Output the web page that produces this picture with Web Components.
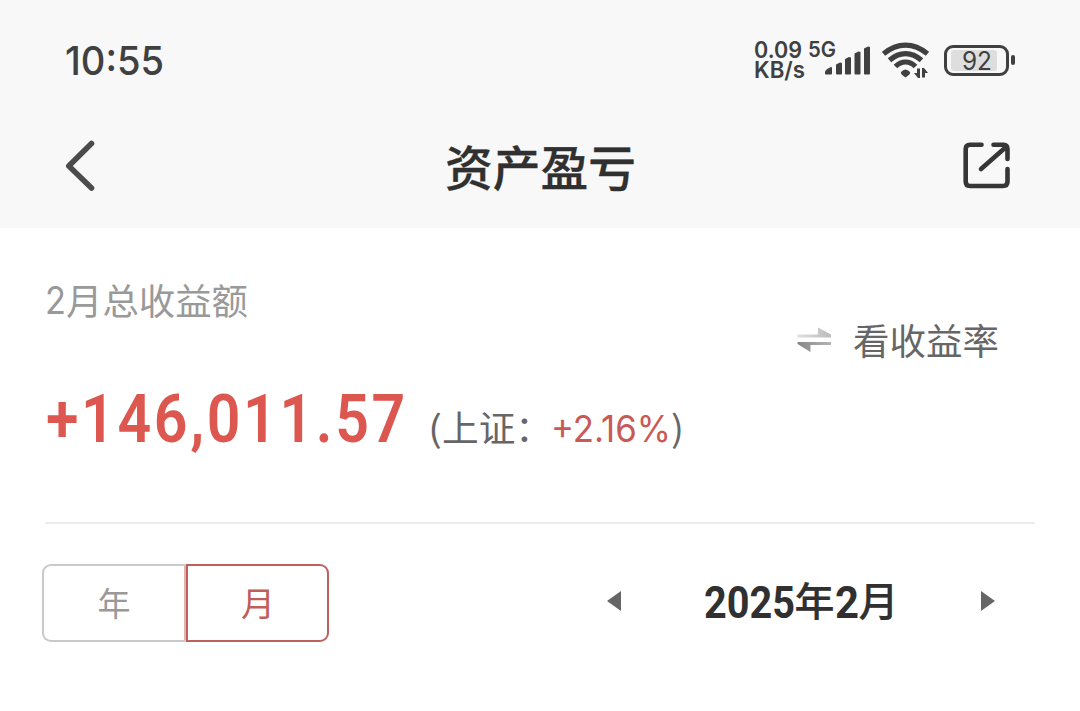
<!DOCTYPE html>
<html lang="zh-CN"><head><meta charset="utf-8"><title>资产盈亏</title>
<style>html,body{margin:0;background:#fff}body{font-family:Inter,"Noto Sans CJK SC",sans-serif;width:1080px;height:711px;overflow:hidden}</style></head>
<body><asset-page></asset-page>
<script>
const define=(name,html,ready)=>customElements.define(name,class extends HTMLElement{
  constructor(){super();this.attachShadow({mode:'open'}).innerHTML=html;}
  connectedCallback(){if(ready)ready.call(this);}
});

/* A run of text condensed or expanded to the advance width in its "w" attribute. */
define('fit-text',`<style>:host{display:block;flex:none;white-space:pre}span{display:inline-block;transform-origin:0 50%}</style><span><slot></slot></span>`,function(){
  const w=+this.getAttribute('w');this.style.width=w+'px';
  const s=this.shadowRoot.querySelector('span');
  const fit=()=>{s.style.transform='none';const n=s.getBoundingClientRect().width;if(n)s.style.transform='scaleX('+w/n+')';};
  fit();document.fonts.ready.then(fit);
});

define('signal-icon',`<style>:host{display:block;width:46px;height:32px}svg{display:block}</style>
<svg width="46" height="32" viewBox="0 0 46 32" fill="#404040"><path d="M0 29.5V28q0-2 3-3.500L6 23q1 0 1 1v5.500q0 1-1 1H1q-1 0-1-1z"/><path d="M11 20.500l4-2q2 0 2 1v10q0 1-1 1h-4q-1 0-1-1z"/><path d="M20 15l4-2q2 0 2 1v15.500q0 1-1 1h-4q-1 0-1-1z"/><path d="M29.500 9.500l4-2q2 0 2 1v21q0 1-1 1h-4q-1 0-1-1z"/><path d="M39 4.500l4-2q2 0 2 1v26q0 1-1 1h-4q-1 0-1-1z"/></svg>`);

define('wifi-icon',`<style>:host{display:block;width:48px;height:38px}svg{display:block}</style>
<svg width="48" height="38" viewBox="0 0 48 38"><g fill="none" stroke="#404040" stroke-width="5.200"><path d="M1.500 12.800Q12 4.100 23.500 4.100T45.500 12.800"/><path d="M7.500 19.300Q15 12.600 23.500 12.600T39.500 19.300"/><path d="M13.500 25.500Q18 21 23.500 21T33.500 25.500"/></g><path d="M19 31q4.500-5 9 0 1 2-4.500 5.500-5.500-3.500-4.500-5.500z" fill="#404040"/><path d="M38 27.500v9.500h-2l-4-5h3v-4.500zM40 36.500v-9.500h2l4 5h-3v4.500z" fill="#404040"/></svg>`);

define('battery-icon',`<style>:host{display:flex;align-items:center;width:72px;height:32px}
.case{box-sizing:border-box;width:65px;height:31px;border:3px solid #404040;border-radius:9px;padding:2px 8px 2px 4px}
.level{height:21px;width:46px;background:#dedede;border-radius:3px;padding-left:11px;box-sizing:border-box;font:400 25px/22px Inter,sans-serif;color:#404040}
.tip{width:4px;height:10px;margin-left:2px;border-radius:2px;background:#404040}</style>
<div class="case"><div class="level"><fit-text w="30">92</fit-text></div></div><div class="tip"></div>`);

define('status-bar',`<style>:host{display:flex;height:120px;box-sizing:border-box;padding:0 64px 0 65px;color:#404040;align-items:flex-start}
.time{font:500 40px/48px Inter,sans-serif;margin-top:37px}
.right{display:flex;margin-left:auto}
.speed{font:600 22.500px/20px Inter,sans-serif;margin:40px 0 0 1px;width:51px}
.net{font:600 21px/20px Inter,sans-serif;margin:40px 0 0 3px;width:27px}
signal-icon{margin:44px 0 0 -10px}wifi-icon{margin:41px 0 0 11px}battery-icon{margin:44px 0 0 14px}</style>
<div class="time"><fit-text w="99">10:55</fit-text></div>
<div class="right"><div class="speed"><fit-text w="48">0.09</fit-text><fit-text w="51">KB/s</fit-text></div><div class="net"><fit-text w="28">5G</fit-text></div><signal-icon></signal-icon><wifi-icon></wifi-icon><battery-icon></battery-icon></div>`);

define('nav-bar',`<style>:host{display:flex;height:108px;box-sizing:border-box;padding:0 68px 0 64px;justify-content:space-between;align-items:flex-start}
.title{font:500 48px/60px "Noto Sans CJK SC",sans-serif;color:#303030;-webkit-text-stroke:.3px #303030;margin:15px 0 0 4px}svg{display:block}.back{margin-top:20px}.share{margin-top:21px}</style>
<svg class="back" width="50" height="52" viewBox="0 0 50 52"><path d="M27.500 3.500L4.800 26l22.700 22" fill="none" stroke="#4b4b4b" stroke-width="5.600" stroke-linecap="round" stroke-linejoin="round"/></svg>
<div class="title"><fit-text w="191">资产盈亏</fit-text></div>
<svg class="share" width="50" height="50" viewBox="0 0 50 50" fill="none" stroke="#363636" stroke-width="4.600" stroke-linecap="round" stroke-linejoin="round"><path d="M19.500 3.700H8Q3.700 3.700 3.700 8V40.500Q3.700 45 8 45H41Q45.500 45 45.500 40.500V28M31.500 3.700H41.500Q45.500 3.700 45.500 8V18M44 6L19 28"/></svg>`);

define('rate-switch',`<style>:host{display:flex;align-items:center;gap:20px;color:#666;font:400 36px/50px "Noto Sans CJK SC",sans-serif}svg{display:block}fit-text{margin-top:-2px}</style>
<svg width="36" height="28" viewBox="0 0 36 28"><defs><linearGradient id="a"><stop stop-color="#e0e0e0"/><stop offset="1" stop-color="#bbb"/></linearGradient><linearGradient id="b"><stop stop-color="#888"/><stop offset="1" stop-color="#b4b4b4"/></linearGradient></defs><path d="M.5 8.500H21V1.500L34 8.500V11.500H.5z" fill="url(#a)"/><path d="M.5 16H34V19H13.500V26L.5 18z" fill="url(#b)"/></svg>
<fit-text w="146">看收益率</fit-text>`);

define('profit-summary',`<style>:host{display:grid;grid-template-columns:1fr auto;box-sizing:border-box;height:296px;margin:0 45px;border-bottom:2px solid #ececec;padding:46px 36px 0 0;grid-template-rows:101px 1fr;align-items:start}
.label{display:flex;font:400 36px/50px "Noto Sans CJK SC",sans-serif;color:#999}
.label .n{font:400 38px/52px Inter,sans-serif}
rate-switch{margin-top:42px}
.values{grid-column:1/3;display:flex;align-items:flex-start}
.amount{font:600 67.500px/80px Roboto,sans-serif;letter-spacing:3px;color:#dc5750;margin:4px 0 0 1px}
.index{display:flex;color:#666;font:400 36px/50px "Noto Sans CJK SC",sans-serif;margin:26px 0 0 20px}
.pct{font:400 37px/50px Inter,sans-serif;color:#c75a55;margin:3px 0 0 -1px}</style>
<div class="label"><fit-text class="n" w="21">2</fit-text><fit-text w="182">月总收益额</fit-text></div><rate-switch></rate-switch>
<div class="values"><div class="amount"><fit-text w="362">+146,011.57</fit-text></div>
<div class="index"><fit-text w="14">(</fit-text><fit-text w="110">上证：</fit-text><div class="pct"><fit-text w="120">+2.16%</fit-text></div><fit-text w="13">)</fit-text></div></div>`);

define('period-tabs',`<style>:host{display:flex;width:287px;height:78px;font:400 33px/72px "Noto Sans CJK SC",sans-serif}
div{box-sizing:border-box;border:2px solid #c9c9c9;display:flex;justify-content:center}
.year{width:144px;border-right-color:#e2b4b0;border-radius:9px 0 0 9px;color:#999}
.month{width:143px;border-color:#bd615d;border-radius:0 9px 9px 0;color:#c05e59}</style>
<div class="year"><fit-text w="33">年</fit-text></div><div class="month"><fit-text w="34">月</fit-text></div>`);

define('month-picker',`<style>:host{display:flex;width:388px;height:60px;justify-content:space-between;align-items:center;color:#303030}
.date{display:flex;align-items:center;margin-left:0;font:500 40px/60px "Noto Sans CJK SC",sans-serif}.c{margin-top:-5px;-webkit-text-stroke:.2px #303030}.n{font:700 45px/60px Roboto,sans-serif;margin-top:3px}svg{display:block}</style>
<svg width="14" height="20"><path d="M0 10L14 0V20z" fill="#666"/></svg>
<div class="date"><fit-text class="n" w="91">2025</fit-text><fit-text class="c" w="40">年</fit-text><fit-text class="n" w="24">2</fit-text><fit-text class="c" w="40">月</fit-text></div>
<svg width="14" height="20"><path d="M14 10L0 0V20z" fill="#666"/></svg>`);

define('asset-page',`<style>:host{display:block;width:1080px;height:711px}header{background:#f8f8f8;height:228px}.controls{display:flex;justify-content:space-between;padding:40px 85px 0 42px}month-picker{margin-top:7px}</style>
<header><status-bar></status-bar><nav-bar></nav-bar></header><main><profit-summary></profit-summary><div class="controls"><period-tabs></period-tabs><month-picker></month-picker></div></main>`);
</script></body></html>
